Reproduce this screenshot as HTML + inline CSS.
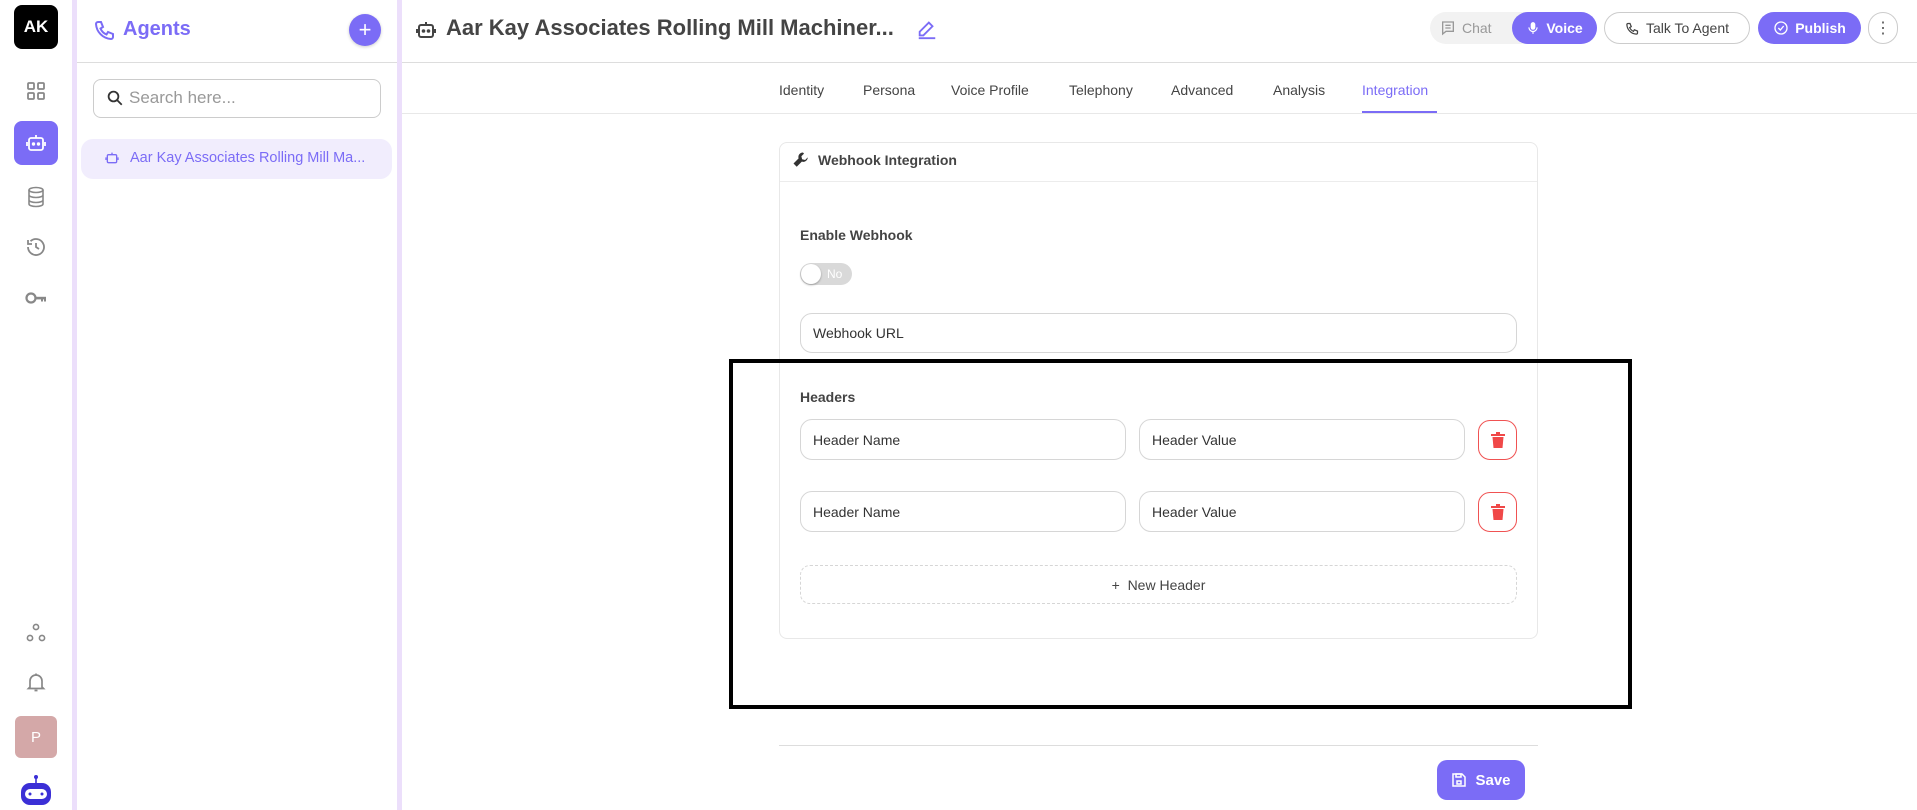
<!DOCTYPE html>
<html><head><meta charset="utf-8">
<style>
*{box-sizing:border-box;margin:0;padding:0}
body{width:1917px;height:810px;overflow:hidden;background:#fff;font-family:"Liberation Sans",sans-serif;color:#3d3d3d;position:relative}
.abs{position:absolute}
.rail{left:0;top:0;width:72px;height:810px;background:#fff}
.lav{background:#ecdffb}
.ico{position:absolute;left:24px;width:24px;height:24px}
.inp{position:absolute;border:1px solid #d6d6d6;border-radius:12px;font-size:14px;color:#333;padding-left:12px;display:flex;align-items:center;background:#fff}
.del{position:absolute;border:1px solid #f05252;border-radius:12px;display:flex;align-items:center;justify-content:center}
.tab{position:absolute;top:82px;font-size:14px;color:#444}
.btn{display:flex;align-items:center;justify-content:center;gap:6px}
</style></head><body>
<div class="abs rail"></div>
<div class="abs" style="left:14px;top:5px;width:44px;height:44px;background:#000;border-radius:8px;color:#fff;font-weight:bold;font-size:17px;display:flex;align-items:center;justify-content:center">AK</div>
<svg class="ico" style="top:79px" viewBox="0 0 24 24" fill="none" stroke="#888" stroke-width="1.8"><rect x="4" y="4" width="6" height="6" rx="1"/><rect x="14" y="4" width="6" height="6" rx="1"/><rect x="4" y="14" width="6" height="6" rx="1"/><rect x="14" y="14" width="6" height="6" rx="1"/></svg>
<div class="abs" style="left:14px;top:121px;width:44px;height:44px;background:#7b6cf6;border-radius:8px"></div>
<svg class="ico" style="top:131px" viewBox="0 0 24 24" fill="none" stroke="#fff" stroke-width="1.8"><rect x="5" y="7" width="14" height="12" rx="2"/><path d="M12 7V4M3 11v4M21 11v4"/><circle cx="9.5" cy="13" r=".8" fill="#fff"/><circle cx="14.5" cy="13" r=".8" fill="#fff"/></svg>
<svg class="ico" style="top:185px" viewBox="0 0 24 24" fill="none" stroke="#888" stroke-width="1.6"><ellipse cx="12" cy="5" rx="7" ry="2.5"/><path d="M5 5v14c0 1.4 3 2.5 7 2.5s7-1.1 7-2.5V5M5 10c0 1.4 3 2.5 7 2.5s7-1.1 7-2.5M5 15c0 1.4 3 2.5 7 2.5s7-1.1 7-2.5"/></svg>
<svg class="ico" style="top:235px" viewBox="0 0 24 24" fill="none" stroke="#888" stroke-width="1.8"><path d="M4 12a8 8 0 1 0 2.5-5.8M4 5v4h4M12 8v4l3 2"/></svg>
<svg class="ico" style="top:286px" viewBox="0 0 24 24" fill="#888"><circle cx="7" cy="12" r="4.5" fill="none" stroke="#888" stroke-width="2.2"/><rect x="11" y="10.8" width="11" height="2.6"/><rect x="17" y="12" width="2" height="3.5"/><rect x="20" y="12" width="2" height="3.5"/></svg>
<svg class="ico" style="top:621px" viewBox="0 0 24 24" fill="none" stroke="#888" stroke-width="1.6"><circle cx="12" cy="6" r="2.6"/><circle cx="6" cy="17" r="2.6"/><circle cx="18" cy="17" r="2.6"/></svg>
<svg class="ico" style="top:670px" viewBox="0 0 24 24" fill="none" stroke="#888" stroke-width="1.7"><path d="M6 17V11a6 6 0 0 1 12 0v6l1.5 1.5h-15zM12 5V3.5M10.5 20.5h3"/></svg>
<div class="abs" style="left:15px;top:716px;width:42px;height:42px;background:#d4a8a8;border-radius:6px;color:#fff;font-size:15px;display:flex;align-items:center;justify-content:center">P</div>
<svg class="abs" style="left:20px;top:774px" width="32" height="32" viewBox="0 0 32 32"><circle cx="16" cy="3" r="2" fill="#3b2fd6"/><rect x="15.2" y="3" width="1.6" height="6" fill="#3b2fd6"/><rect x="1" y="9" width="30" height="22" rx="9" fill="#3b2fd6"/><rect x="5" y="15" width="22" height="10" rx="5" fill="#fff"/><circle cx="10" cy="20" r="1.5" fill="#3b2fd6"/><circle cx="22" cy="20" r="1.5" fill="#3b2fd6"/></svg>

<div class="abs lav" style="left:72px;top:0;width:5px;height:810px"></div>
<div class="abs lav" style="left:397px;top:0;width:5px;height:810px"></div>
<div class="abs" style="left:77px;top:62px;width:320px;height:1px;background:#ddd"></div>
<svg class="abs" style="left:93px;top:18px" width="24" height="24" viewBox="0 0 24 24" fill="none" stroke="#7b6cf6" stroke-width="2"><path d="M5 4h3l2 5-2.5 1.5a11 11 0 0 0 6 6L15 14l5 2v3a2 2 0 0 1-2 2A16 16 0 0 1 3 6a2 2 0 0 1 2-2z"/></svg>
<div class="abs" style="left:123px;top:18px;font-size:20px;font-weight:bold;color:#7b6cf6">Agents</div>
<div class="abs" style="left:349px;top:14px;width:32px;height:32px;border-radius:50%;background:#7b6cf6;color:#fff;font-size:22px;display:flex;align-items:center;justify-content:center;box-shadow:0 1px 3px rgba(0,0,0,.2)">+</div>
<div class="abs" style="left:93px;top:79px;width:288px;height:39px;border:1px solid #ccc;border-radius:8px"></div>
<svg class="abs" style="left:106px;top:89px" width="18" height="18" viewBox="0 0 24 24" fill="none" stroke="#333" stroke-width="2.4"><circle cx="10" cy="10" r="6.5"/><path d="M15 15l6 6"/></svg>
<div class="abs" style="left:129px;top:88px;font-size:17px;color:#999">Search here...</div>
<div class="abs" style="left:81px;top:139px;width:311px;height:40px;background:#f1edfd;border-radius:12px"></div>
<svg class="abs" style="left:104px;top:150px" width="16" height="16" viewBox="0 0 24 24" fill="none" stroke="#7b6cf6" stroke-width="2"><rect x="5" y="7" width="14" height="12" rx="2"/><path d="M12 7V4M3 11v4M21 11v4"/></svg>
<div class="abs" style="left:130px;top:150px;font-size:14.5px;color:#7b6cf6">Aar Kay Associates Rolling Mill Ma...</div>

<div class="abs" style="left:402px;top:62px;width:1515px;height:1px;background:#ddd"></div>
<svg class="abs" style="left:414px;top:18px" width="24" height="24" viewBox="0 0 24 24" fill="none" stroke="#444" stroke-width="2"><rect x="5" y="7" width="14" height="12" rx="2"/><path d="M12 7V4M3 11v4M21 11v4"/><circle cx="9.5" cy="13" r=".8" fill="#444"/><circle cx="14.5" cy="13" r=".8" fill="#444"/></svg>
<div class="abs" style="left:446px;top:15px;font-size:22px;font-weight:bold;color:#444">Aar Kay Associates Rolling Mill Machiner...</div>
<svg class="abs" style="left:916px;top:18px" width="22" height="22" viewBox="0 0 24 24" fill="none" stroke="#7b6cf6" stroke-width="2"><path d="M14 5l4 4L8 19H4v-4zM3 22h18"/></svg>
<div class="abs" style="left:1430px;top:12px;width:167px;height:32px;background:#f2f2f2;border-radius:16px"></div>
<div class="abs btn" style="left:1440px;top:12px;height:32px;font-size:14px;color:#999"><svg width="16" height="16" viewBox="0 0 24 24" fill="none" stroke="#999" stroke-width="2"><path d="M4 3h16v14H9l-5 4z"/><path d="M8 8h8M8 12h8"/></svg>Chat</div>
<div class="abs btn" style="left:1512px;top:12px;width:85px;height:32px;background:#7b6cf6;border-radius:16px;color:#fff;font-size:14px;font-weight:bold"><svg width="14" height="16" viewBox="0 0 24 24" fill="#fff"><rect x="8" y="2" width="8" height="13" rx="4"/><path d="M5 11a7 7 0 0 0 14 0M12 18v4" fill="none" stroke="#fff" stroke-width="2"/></svg>Voice</div>
<div class="abs btn" style="left:1604px;top:12px;width:146px;height:32px;border:1px solid #ccc;border-radius:16px;font-size:14px;color:#444"><svg width="15" height="15" viewBox="0 0 24 24" fill="none" stroke="#444" stroke-width="2"><path d="M5 4h3l2 5-2.5 1.5a11 11 0 0 0 6 6L15 14l5 2v3a2 2 0 0 1-2 2A16 16 0 0 1 3 6a2 2 0 0 1 2-2z"/></svg>Talk To Agent</div>
<div class="abs btn" style="left:1758px;top:12px;width:103px;height:32px;background:#7b6cf6;border-radius:16px;color:#fff;font-size:14px;font-weight:bold"><svg width="16" height="16" viewBox="0 0 24 24" fill="none" stroke="#fff" stroke-width="2"><circle cx="12" cy="12" r="9"/><path d="M8 12l3 3 5-6"/></svg>Publish</div>
<div class="abs" style="left:1868px;top:12px;width:30px;height:32px;border:1px solid #ccc;border-radius:16px;font-size:16px;color:#555;display:flex;align-items:center;justify-content:center">&#8942;</div>

<div class="abs" style="left:402px;top:113px;width:1515px;height:1px;background:#e8e8e8"></div>
<div class="tab" style="left:779px">Identity</div>
<div class="tab" style="left:863px">Persona</div>
<div class="tab" style="left:951px">Voice Profile</div>
<div class="tab" style="left:1069px">Telephony</div>
<div class="tab" style="left:1171px">Advanced</div>
<div class="tab" style="left:1273px">Analysis</div>
<div class="tab" style="left:1362px;color:#7b6cf6">Integration</div>
<div class="abs" style="left:1362px;top:111px;width:75px;height:2px;background:#7b6cf6"></div>

<div class="abs" style="left:779px;top:142px;width:759px;height:497px;border:1px solid #e8e8e8;border-radius:8px"></div>
<div class="abs" style="left:780px;top:181px;width:757px;height:1px;background:#ececec"></div>
<svg class="abs" style="left:792px;top:151px" width="18" height="18" viewBox="0 0 24 24" fill="#333"><path d="M14.5 2a6 6 0 0 0-5.7 7.9L2 16.7 6.3 21l6.8-6.8A6 6 0 0 0 21 8.5l-3.5 3.5-4-1-1-4L16 3.5a6 6 0 0 0-1.5-1.5z"/></svg>
<div class="abs" style="left:818px;top:152px;font-size:14px;font-weight:bold;color:#444">Webhook Integration</div>
<div class="abs" style="left:800px;top:227px;font-size:14px;font-weight:bold;color:#444">Enable Webhook</div>
<div class="abs" style="left:800px;top:263px;width:52px;height:22px;border-radius:11px;background:#d9d9d9"></div>
<div class="abs" style="left:801px;top:264px;width:20px;height:20px;border-radius:50%;background:#fff;box-shadow:0 1px 2px rgba(0,0,0,.3)"></div>
<div class="abs" style="left:827px;top:267px;font-size:12px;color:#fff">No</div>
<div class="inp" style="left:800px;top:313px;width:717px;height:40px">Webhook URL</div>
<div class="abs" style="left:800px;top:389px;font-size:14px;font-weight:bold;color:#444">Headers</div>
<div class="inp" style="left:800px;top:419px;width:326px;height:41px">Header Name</div>
<div class="inp" style="left:1139px;top:419px;width:326px;height:41px">Header Value</div>
<div class="del" style="left:1478px;top:420px;width:39px;height:40px"><svg width="14" height="16" viewBox="0 0 14 16" fill="#f04848"><rect x="0" y="2" width="14" height="2"/><rect x="5" y="0" width="4" height="2"/><path d="M1.5 5h11l-1 11h-9z"/></svg></div>
<div class="inp" style="left:800px;top:491px;width:326px;height:41px">Header Name</div>
<div class="inp" style="left:1139px;top:491px;width:326px;height:41px">Header Value</div>
<div class="del" style="left:1478px;top:492px;width:39px;height:40px"><svg width="14" height="16" viewBox="0 0 14 16" fill="#f04848"><rect x="0" y="2" width="14" height="2"/><rect x="5" y="0" width="4" height="2"/><path d="M1.5 5h11l-1 11h-9z"/></svg></div>
<div class="abs" style="left:800px;top:565px;width:717px;height:39px;border:1px dashed #d6d6d6;border-radius:10px;font-size:14px;color:#444;display:flex;align-items:center;justify-content:center">+&nbsp;&nbsp;New Header</div>

<div class="abs" style="left:729px;top:359px;width:903px;height:350px;border:4px solid #000"></div>

<div class="abs" style="left:779px;top:745px;width:759px;height:1px;background:#ddd"></div>
<div class="abs" style="left:1437px;top:760px;width:88px;height:40px;background:#7b6cf6;border-radius:10px;color:#fff;font-size:15px;font-weight:bold;display:flex;align-items:center;justify-content:center;gap:8px"><svg width="16" height="16" viewBox="0 0 16 16" fill="none" stroke="#fff" stroke-width="1.5"><path d="M2 2h9l3 3v9H2z"/><rect x="5" y="2" width="5" height="3"/><rect x="6" y="9" width="4" height="3"/></svg>Save</div>
</body></html>
